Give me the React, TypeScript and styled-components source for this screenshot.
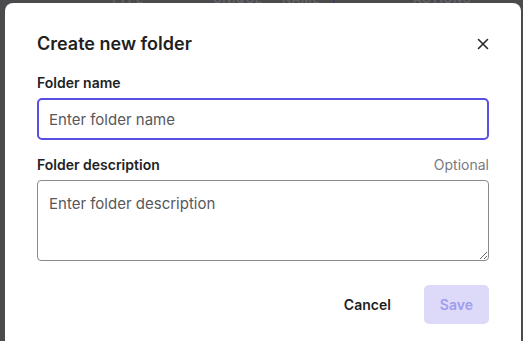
import React, { useState } from "react";
import styled, { createGlobalStyle } from "styled-components";

const GlobalStyle = createGlobalStyle`
  * { box-sizing: border-box; }
  html, body {
    margin: 0;
    padding: 0;
    background: #4b4b4d;
    font-family: Inter, "Noto Sans", "Liberation Sans", sans-serif;
    overflow: hidden;
  }
`;

const Page = styled.div`
  width: 523px;
  height: 341px;
  overflow: hidden;
`;

// Table header of the page behind the dimmed backdrop, only its bottom edge shows
const BehindHeader = styled.div`
  height: 3px;
  overflow: hidden;
  display: flex;
  align-items: flex-end;
  font-size: 12px;
  font-weight: 600;
  letter-spacing: 0.5px;
  color: #626265;
  line-height: 12px;
`;

const HeaderCell = styled.span<{ $w: number }>`
  width: ${(p) => p.$w}px;
  flex-shrink: 0;
  margin-bottom: -2px;
`;

const HeaderMark = styled.span`
  width: 2px;
  height: 3px;
  background: #3a3f6e;
  flex-shrink: 0;
  margin-right: 78px;
`;

const Modal = styled.div`
  margin-left: 5px;
  width: 516px;
  background: #ffffff;
  border-radius: 8px;
  padding: 29px 32px 24px 32px;
  min-height: 360px;
`;

const ModalHeader = styled.div`
  display: flex;
  align-items: center;
  justify-content: space-between;
  height: 24px;
  margin-bottom: 17px;
`;

const Title = styled.h2`
  margin: 0;
  font-size: 18px;
  line-height: 24px;
  font-weight: 600;
  color: #1f1f21;
`;

const CloseButton = styled.button`
  width: 16px;
  height: 16px;
  padding: 0;
  margin-right: -2px;
  border: none;
  background: none;
  display: flex;
  align-items: center;
  justify-content: center;
  cursor: pointer;
  color: #2a2a2c;
`;

const Field = styled.div<{ $last?: boolean }>`
  display: flex;
  flex-direction: column;
  margin-bottom: ${(p) => (p.$last ? 0 : 15)}px;
`;

const LabelRow = styled.div`
  display: flex;
  justify-content: space-between;
  align-items: baseline;
  height: 20px;
  margin-bottom: 5px;
`;

const Label = styled.label`
  font-size: 14px;
  line-height: 20px;
  font-weight: 600;
  color: #222224;
`;

const Hint = styled.span`
  font-size: 14px;
  line-height: 20px;
  color: #7a7a7d;
`;

const TextInput = styled.input`
  height: 42px;
  width: 100%;
  border: 2px solid #5a4fe3;
  border-radius: 5px;
  padding: 0 10px;
  font-family: inherit;
  font-size: 15px;
  color: #222;
  outline: none;

  &::placeholder {
    color: #58585b;
  }
`;

const TextArea = styled.textarea`
  height: 81px;
  width: 100%;
  border: 1px solid #8a8a8d;
  border-radius: 4px;
  padding: 13px 11px;
  font-family: inherit;
  font-size: 15px;
  line-height: 20px;
  color: #222;
  outline: none;
  resize: vertical;
  display: block;

  &::placeholder {
    color: #58585b;
  }
`;

const Footer = styled.div`
  display: flex;
  justify-content: flex-end;
  gap: 17px;
  margin-top: 24px;
`;

const Button = styled.button<{ $primary?: boolean }>`
  height: 39px;
  padding: 0 16px;
  border: none;
  border-radius: 5px;
  font-family: inherit;
  font-size: 14px;
  font-weight: 600;
  cursor: pointer;
  background: ${(p) => (p.$primary ? "#dcdaf8" : "transparent")};
  color: ${(p) => (p.$primary ? "#a09cef" : "#1f1f21")};
`;

const App: React.FC = () => {
  const [name, setName] = useState("");
  const [description, setDescription] = useState("");

  return (
    <Page>
      <GlobalStyle />
      <BehindHeader>
        <HeaderCell $w={110} />
        <HeaderCell $w={103}>TYPE</HeaderCell>
        <HeaderCell $w={69}>UNIQUE</HeaderCell>
        <HeaderCell $w={51}>NAME</HeaderCell>
        <HeaderMark />
        <HeaderCell $w={80}>ACTIONS</HeaderCell>
      </BehindHeader>
      <Modal>
        <ModalHeader>
          <Title>Create new folder</Title>
          <CloseButton aria-label="Close">
            <svg width="12" height="12" viewBox="0 0 12 12" fill="none">
              <path
                d="M1.5 1.5L10.5 10.5M10.5 1.5L1.5 10.5"
                stroke="currentColor"
                strokeWidth="1.6"
                strokeLinecap="round"
              />
            </svg>
          </CloseButton>
        </ModalHeader>
        <Field>
          <LabelRow>
            <Label>Folder name</Label>
          </LabelRow>
          <TextInput
            placeholder="Enter folder name"
            value={name}
            onChange={(e) => setName(e.target.value)}
          />
        </Field>
        <Field $last>
          <LabelRow>
            <Label>Folder description</Label>
            <Hint>Optional</Hint>
          </LabelRow>
          <TextArea
            placeholder="Enter folder description"
            value={description}
            onChange={(e) => setDescription(e.target.value)}
          />
        </Field>
        <Footer>
          <Button>Cancel</Button>
          <Button $primary disabled={!name}>
            Save
          </Button>
        </Footer>
      </Modal>
    </Page>
  );
};

export default App;
